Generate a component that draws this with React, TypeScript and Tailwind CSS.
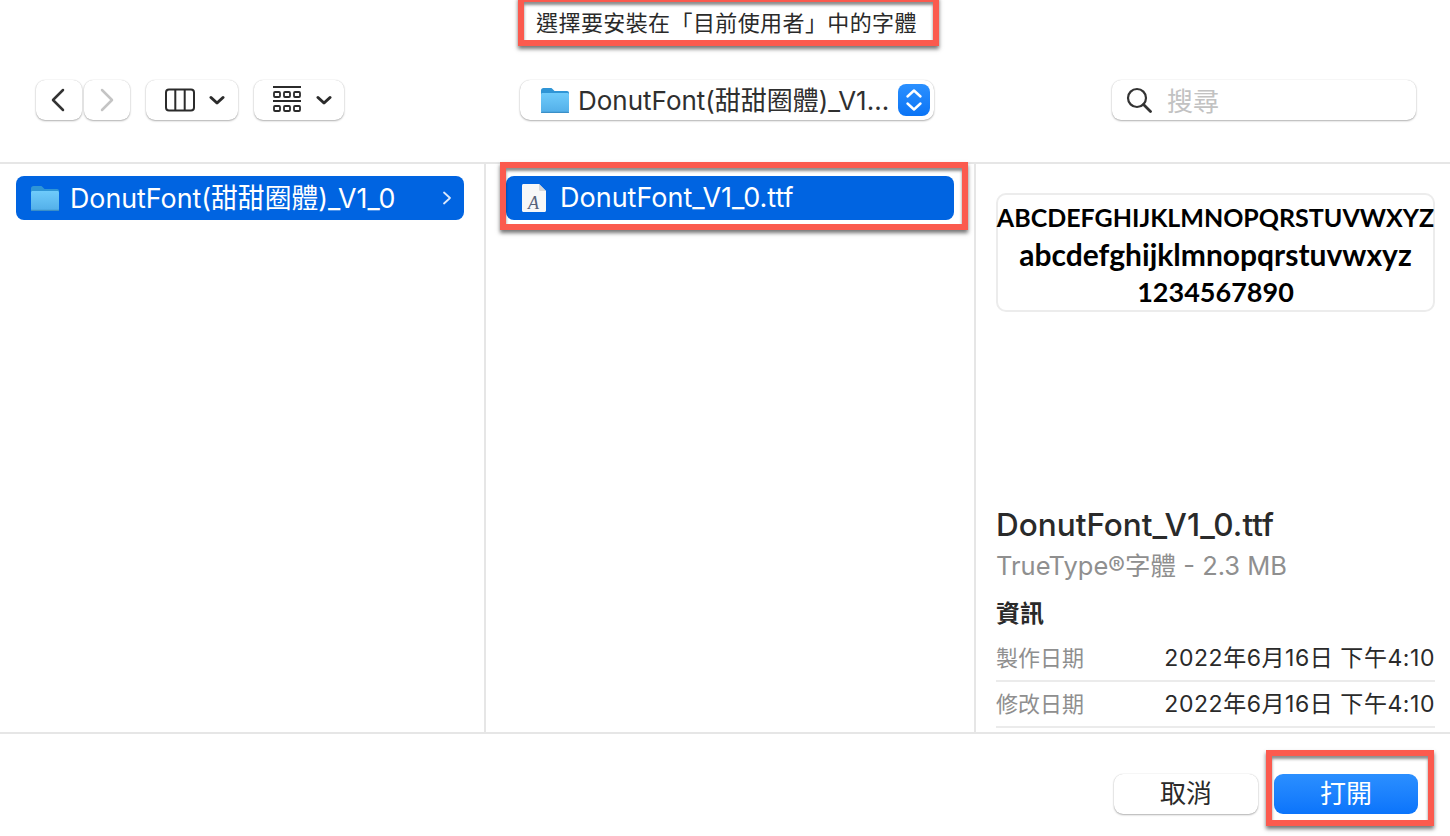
const sans = 'font-["Inter","Noto_Sans_CJK_TC",sans-serif]';

function FolderIcon() {
  return (
    <svg width="30" height="28" viewBox="0 0 30 28" className="shrink-0">
      <defs>
        <linearGradient id="folderBody" x1="0" y1="0" x2="0" y2="1">
          <stop offset="0" stopColor="#6fcbfb" />
          <stop offset="1" stopColor="#52aee8" />
        </linearGradient>
      </defs>
      <path d="M1 4.500C1 3 2 2 3.500 2h7c1 0 1.600.4 2.300 1.200L14.500 5H27c1.200 0 2 .8 2 2v3H1z" fill="#2f95d6" />
      <path d="M1 8.500C1 7.600 1.700 7 2.500 7h25c.9 0 1.500.6 1.500 1.500V25c0 1.100-.8 2-2 2H3c-1.200 0-2-.9-2-2z" fill="url(#folderBody)" />
      <rect x="1" y="25.800" width="28" height="1.200" rx=".6" fill="#3a8fc8" />
    </svg>
  );
}

function FileIcon() {
  return (
    <div className="relative w-6 h-[28px] shrink-0">
      <svg width="24" height="28" viewBox="0 0 24 28" className="absolute inset-0">
        <path d="M1.500 0H17l7 7v19.500c0 .9-.6 1.500-1.500 1.500h-21C.6 28 0 27.400 0 26.500V1.500C0 .6.600 0 1.500 0z" fill="#f7f7f8" />
        <path d="M17 0l7 7h-5.500C17.600 7 17 6.400 17 5.500z" fill="#d6d7da" />
      </svg>
      <span className='absolute left-[6px] top-[9px] font-["Liberation_Serif",serif] italic text-[18px] leading-[20px] text-[#56627a]'>
        A
      </span>
    </div>
  );
}

function Chevron({ dir, color }: { dir: 'left' | 'right'; color: string }) {
  return (
    <svg width="16" height="24" viewBox="0 0 16 24" fill="none" stroke={color} strokeWidth="2.500" strokeLinecap="round" strokeLinejoin="round">
      <path d={dir === 'left' ? 'M12 2 2 12l10 10' : 'M3 2l10 10L3 22'} />
    </svg>
  );
}

function SmallDown() {
  return (
    <svg width="16" height="11" viewBox="0 0 16 11" fill="none" stroke="#2b2b2b" strokeWidth="3" strokeLinecap="round" strokeLinejoin="round">
      <path d="M2 2.500 8 8l6-5.500" />
    </svg>
  );
}

function ToolButton({ className, children }: { className: string; children: React.ReactNode }) {
  return (
    <div className={`h-10 flex items-center justify-center rounded-[9px] bg-white shadow-[0_1px_2px_rgba(0,0,0,0.3),0_0_1px_rgba(0,0,0,0.2)] ${className}`}>
      {children}
    </div>
  );
}

function Highlight({ className }: { className: string }) {
  return (
    <div className={`absolute border-[6px] border-[#fb5a4e] shadow-[0_3px_4px_rgba(0,0,0,0.55),inset_0_3px_3px_rgba(0,0,0,0.45)] pointer-events-none ${className}`} />
  );
}

function InfoRow({ label }: { label: string }) {
  return (
    <div className="h-[46px] flex items-center justify-between border-b-2 border-[#ebebeb]">
      <span className="text-[22px] text-[#8f8f8f]">{label}</span>
      <span className="text-[23px] text-[#2a2a2a] tracking-[0.55px]">2022年6月16日 下午4:10</span>
    </div>
  );
}

export default function App() {
  return (
    <div className={`relative w-[1450px] h-[836px] overflow-hidden bg-white flex flex-col ${sans}`}>
      <header className="h-[164px] shrink-0 border-b-2 border-[#e6e6e6] flex flex-col">
        <div className="h-[46px] flex items-center justify-center pl-[3px] text-[22px] tracking-[0.4px] text-[#2a2a2a]">
          選擇要安裝在「目前使用者」中的字體
        </div>
        <div className="flex items-center mt-[34px] pl-9">
          <div className="flex gap-[2px]">
            <ToolButton className="w-[46px]"><Chevron dir="left" color="#333333" /></ToolButton>
            <ToolButton className="w-[46px]"><Chevron dir="right" color="#c4c4c4" /></ToolButton>
          </div>
          <ToolButton className="w-[92px] ml-4 gap-[14px] pl-[6px]">
            <svg width="30" height="24" viewBox="0 0 30 24" fill="none" stroke="#2b2b2b" strokeWidth="2">
              <rect x="1" y="1.500" width="28" height="21" rx="3" />
              <path d="M10.300 1.500v21M19.700 1.500v21" />
            </svg>
            <SmallDown />
          </ToolButton>
          <ToolButton className="w-[90px] ml-4 gap-[15px] pl-[7px]">
            <svg width="28" height="28" viewBox="0 0 28 28" fill="none" stroke="#2b2b2b" strokeWidth="1.800">
              <path d="M0 1h28M0 15h28" />
              <rect x="1" y="6" width="6" height="5" rx="1" />
              <rect x="11" y="6" width="6" height="5" rx="1" />
              <rect x="21" y="6" width="6" height="5" rx="1" />
              <rect x="1" y="20" width="6" height="5" rx="1" />
              <rect x="11" y="20" width="6" height="5" rx="1" />
              <rect x="21" y="20" width="6" height="5" rx="1" />
            </svg>
            <SmallDown />
          </ToolButton>
          <ToolButton className="w-[414px] ml-[176px] justify-start pl-5 pr-1 rounded-[10px]">
            <FolderIcon />
            <span className="ml-2 flex-1 text-[26px] text-[#2f2f2f] whitespace-nowrap">DonutFont(甜甜圈體)_V1...</span>
            <div className="w-8 h-8 rounded-[8px] bg-gradient-to-b from-[#2a90ff] to-[#0a74f5] flex items-center justify-center">
              <svg width="20" height="26" viewBox="0 0 20 26" fill="none" stroke="white" strokeWidth="2.400" strokeLinecap="round" strokeLinejoin="round">
                <path d="M3.500 9.500 10 3.500l6.500 6M3.500 16.500l6.500 6 6.500-6" />
              </svg>
            </div>
          </ToolButton>
          <ToolButton className="w-[304px] ml-[178px] justify-start pl-[14px] rounded-[8px]">
            <svg width="26" height="26" viewBox="0 0 26 26" fill="none" stroke="#333333" strokeWidth="2.200" strokeLinecap="round">
              <circle cx="11" cy="11" r="9" />
              <path d="M17.500 17.500 24.500 24.500" strokeWidth="2.800" />
            </svg>
            <span className="ml-[15px] pt-[3px] text-[26px] text-[#c2c2c2]">搜尋</span>
          </ToolButton>
        </div>
      </header>

      <main className="flex-1 min-h-0 flex">
        <section className="w-[486px] shrink-0 border-r-2 border-[#e6e6e6] pt-3 px-4 pr-5">
          <div className="h-11 rounded-[8px] bg-[#0064e1] flex items-center pl-[14px] pr-3 text-white">
            <FolderIcon />
            <span className="ml-[10px] flex-1 text-[26.800px] whitespace-nowrap">DonutFont(甜甜圈體)_V1_0</span>
            <svg width="10" height="14" viewBox="0 0 10 14" fill="none" stroke="#dbe8fb" strokeWidth="1.800" strokeLinecap="round" strokeLinejoin="round">
              <path d="M2 1.500 8 7l-6 5.500" />
            </svg>
          </div>
        </section>

        <section className="w-[490px] shrink-0 border-r-2 border-[#e6e6e6] pt-3 pl-5 pr-[20px]">
          <div className="h-11 rounded-[8px] bg-[#0064e1] flex items-center pl-4 text-white">
            <FileIcon />
            <span className="ml-[14px] text-[27px] whitespace-nowrap">DonutFont_V1_0.ttf</span>
          </div>
        </section>

        <section className="flex-1 min-w-0 pl-5 pr-[15px] flex flex-col">
          <div className='mt-[29px] h-[119px] pt-1 rounded-[10px] border-2 border-[#ececec] flex flex-col items-center justify-center font-["Lato",sans-serif] font-bold text-black leading-[37px] whitespace-nowrap'>
            <span className="text-[25px]">ABCDEFGHIJKLMNOPQRSTUVWXYZ</span>
            <span className="text-[30px]">abcdefghijklmnopqrstuvwxyz</span>
            <span className="text-[27px]">1234567890</span>
          </div>
          <div className="mt-auto">
            <div className="text-[31.500px] leading-[36px] font-medium text-[#2a2a2a]">DonutFont_V1_0.ttf</div>
            <div className="mt-[6px] text-[25.500px] leading-[34px] text-[#8f8f8f]">TrueType®字體 - 2.3 MB</div>
            <div className="mt-[14px] text-[24px] leading-[34px] font-bold text-[#2a2a2a]">資訊</div>
            <div className="mt-[5px]">
              <InfoRow label="製作日期" />
              <InfoRow label="修改日期" />
            </div>
            <div className="h-1" />
          </div>
        </section>
      </main>

      <footer className="h-[104px] shrink-0 border-t-2 border-[#e6e6e6] flex items-start justify-end pt-[40px] pr-[32px] gap-4">
        <div className="w-[144px] h-10 pb-[2px] rounded-[9px] bg-white shadow-[0_1px_2px_rgba(0,0,0,0.3),0_0_1px_rgba(0,0,0,0.2)] flex items-center justify-center text-[26px] text-[#2a2a2a]">
          取消
        </div>
        <div className="w-[144px] h-10 pb-[2px] rounded-[9px] bg-gradient-to-b from-[#2b8fff] to-[#0a74fb] flex items-center justify-center text-[26px] text-white">
          打開
        </div>
      </footer>

      <Highlight className="left-[518px] -top-[4px] w-[421px] h-[50px]" />
      <Highlight className="left-[500px] top-[162px] w-[468px] h-[68px]" />
      <Highlight className="left-[1266px] top-[750px] w-[168px] h-[76px]" />
    </div>
  );
}
